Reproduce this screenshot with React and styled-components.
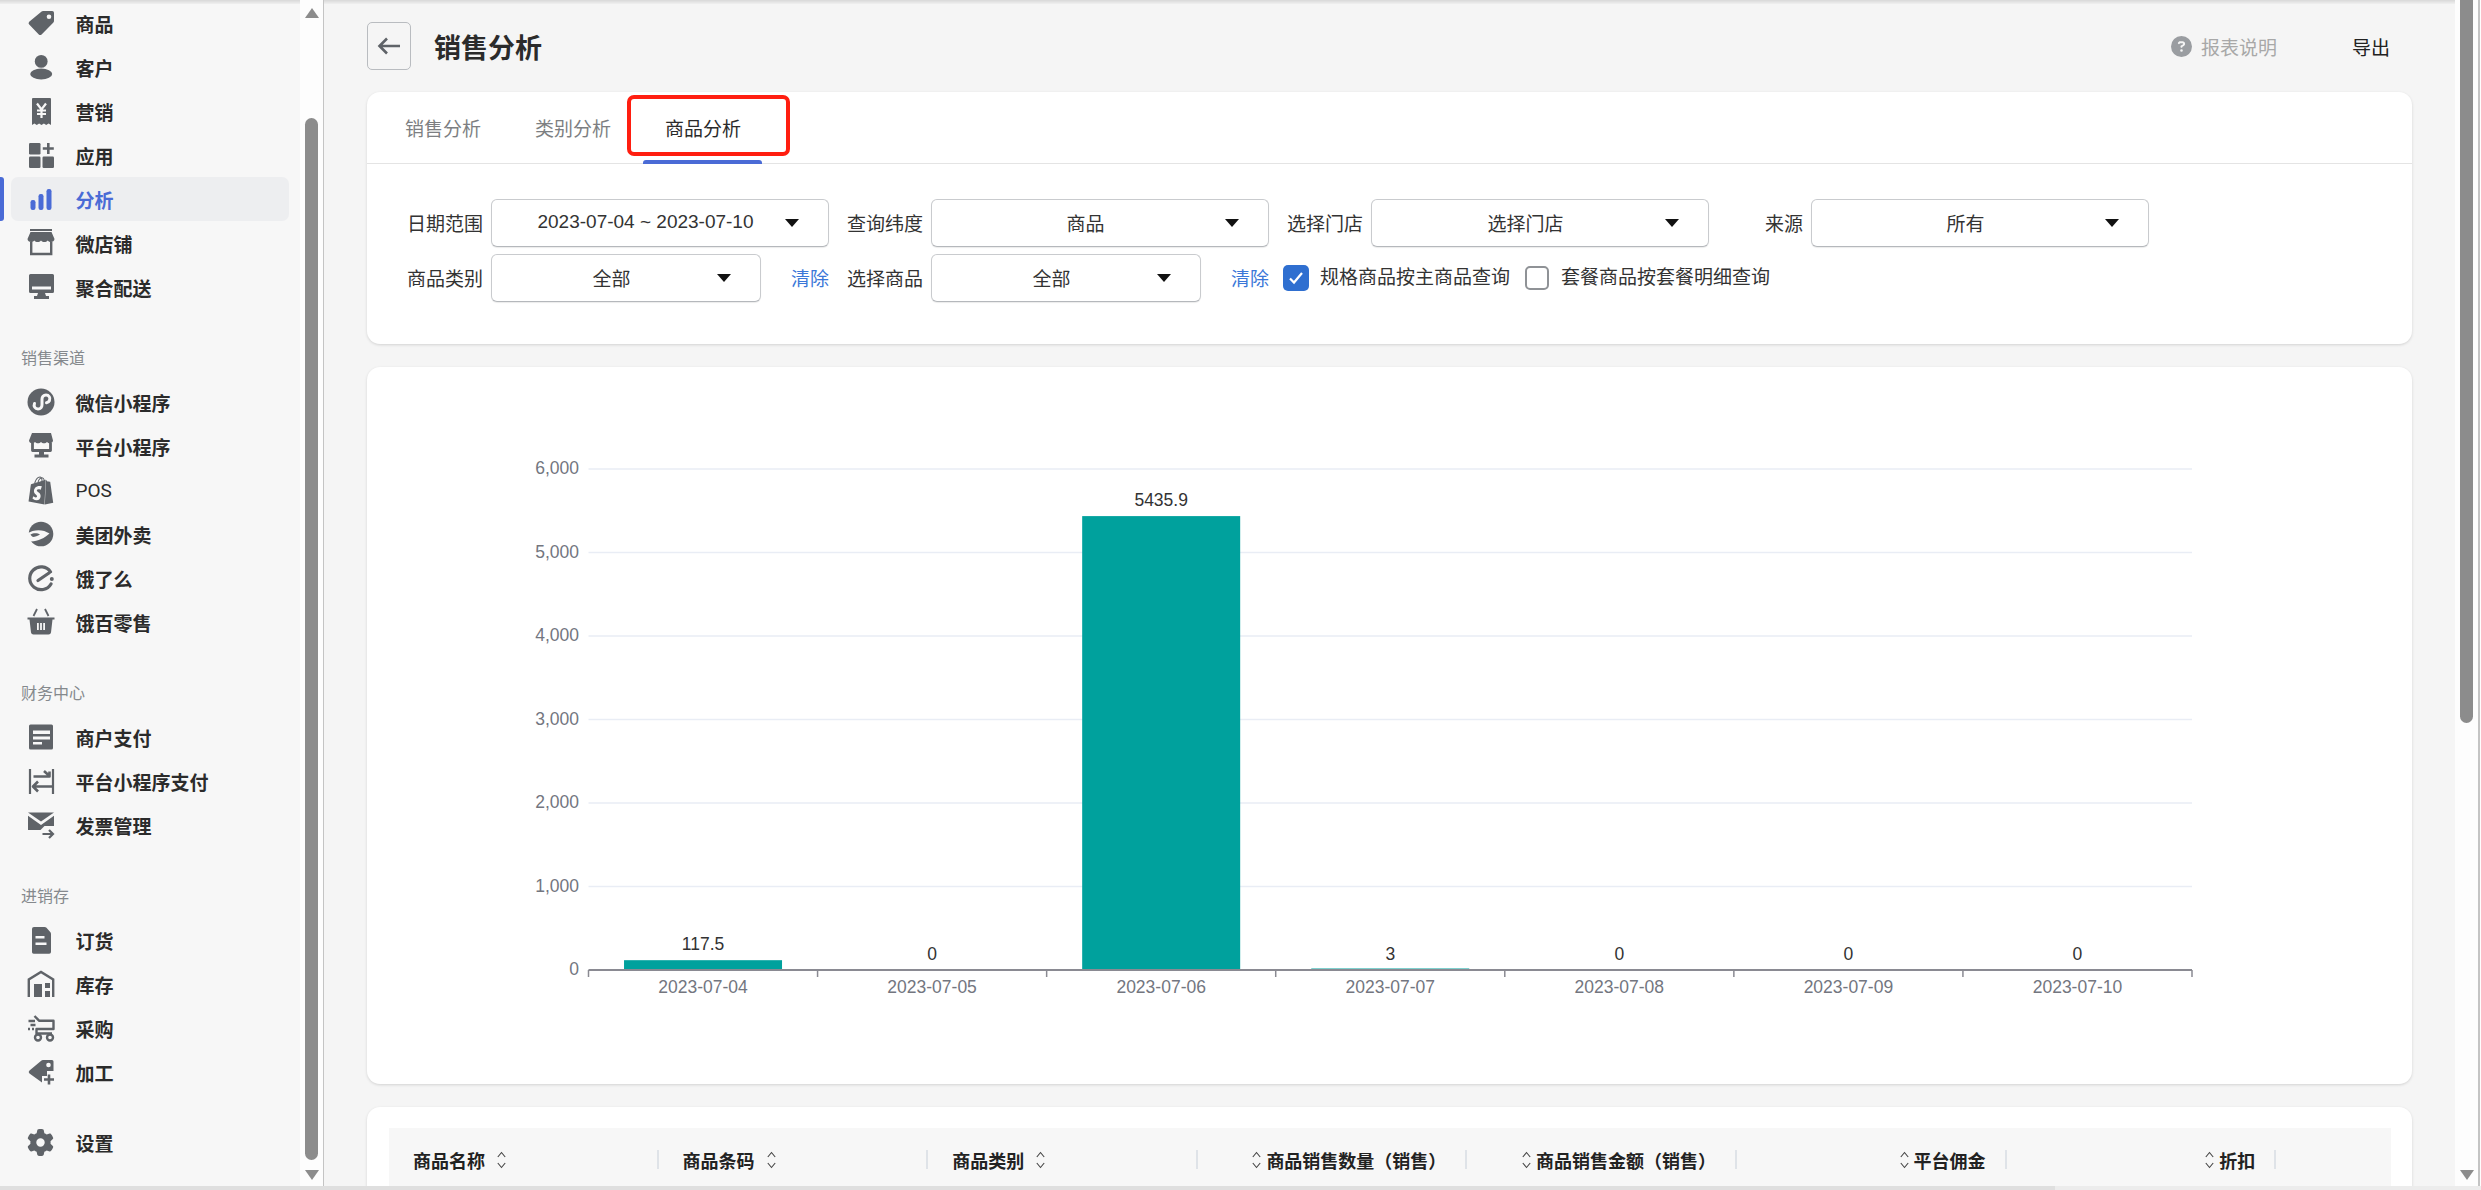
import React from 'react';
import styled, { createGlobalStyle } from 'styled-components';
import { SiShopify } from 'react-icons/si';
import { FaGear, FaCircleQuestion } from 'react-icons/fa6';

const GlobalStyle = createGlobalStyle`
  html, body { margin: 0; padding: 0; height: 100%; overflow: hidden; }
  body {
    font-family: "Liberation Sans", "Noto Sans CJK SC", sans-serif;
    background: #fff;
    color: #222;
  }
  * { box-sizing: border-box; }
`;

const ICON = '#5f6368';

const Glyph = ({ children, color = ICON }) => (
  <svg width="28" height="28" viewBox="0 0 28 28" fill={color} stroke="none">{children}</svg>
);

const line = { fill: 'none', stroke: ICON, strokeWidth: 2.4 };
const white = { fill: 'none', stroke: '#f7f7f7', strokeWidth: 2.2 };

const icons = {
  tag: <Glyph><path fillRule="evenodd" d="M16 2h9.2A1.8 1.8 0 0 1 27 3.8V12a2 2 0 0 1-.6 1.4L14.6 25.4a2 2 0 0 1-2.8 0L2.2 15.6a2 2 0 0 1 0-2.8L14.6 2.6A2 2 0 0 1 16 2zm6 3.4a2.3 2.3 0 1 0 0 4.6 2.3 2.3 0 0 0 0-4.6z" /></Glyph>,
  user: <Glyph><circle cx="14.2" cy="8.4" r="6.4" /><ellipse cx="14.2" cy="21" rx="11" ry="5.4" /></Glyph>,
  coupon: <Glyph><path d="M5 2a1 1 0 0 1 1-1h17a1 1 0 0 1 1 1v26l-2.4-1.6-2.4 1.6-2.3-1.6-2.4 1.6-2.4-1.6-2.3 1.6-2.4-1.6L5 28z" /><path {...white} d="M10 6.5l4.5 6 4.5-6M14.5 12.5V21M10 13.5h9M10 17h9" /></Glyph>,
  apps: <Glyph><rect x="2" y="2" width="11.5" height="11.5" rx="1.2" /><rect x="2" y="15.5" width="11.5" height="11.5" rx="1.2" /><rect x="15.5" y="15.5" width="11.5" height="11.5" rx="1.2" /><path d="M20 2h2.6v4.2h4.2v2.6h-4.2V13H20V8.8h-4.2V6.2H20z" /></Glyph>,
  chart: <Glyph color="#4a6bd6"><rect x="3.5" y="15" width="5" height="10" rx="2.2" /><rect x="11.5" y="9" width="5" height="16" rx="2.2" /><rect x="19.5" y="4" width="5" height="21" rx="2.2" /></Glyph>,
  store: <Glyph><path d="M3 0h22v2H3zM3.5 3h21L27.5 10c0 2-2 3-3.4 3-1.3 0-2.4-.6-3.4-1.6-1 1-2 1.6-3.3 1.6s-2.4-.6-3.4-1.6c-1 1-2.1 1.6-3.4 1.6s-2.3-.6-3.3-1.6c-1 1-2.1 1.6-3.4 1.6C2.5 13 .5 12 .5 10z" /><path {...line} d="M4.2 13v12h20V13" /></Glyph>,
  monitor: <Glyph><path fillRule="evenodd" d="M3.5 1h22A1.5 1.5 0 0 1 27 2.5v16a1.5 1.5 0 0 1-1.5 1.5h-22A1.5 1.5 0 0 1 2 18.5v-16A1.5 1.5 0 0 1 3.5 1zM5 13.5V16.5h19V13.5z" /><path d="M11 20h7l1 3h3v3H7v-3h3z" /></Glyph>,
  wechat: <Glyph><circle cx="14" cy="14" r="13.5" /><path fill="none" stroke="#f7f7f7" strokeWidth="3" strokeLinecap="round" d="M7.5 15.5c-1.2 2.8.6 5.5 3.5 5.5 2.6 0 4-2 4-4.3v-5.4c0-2.3 1.4-4.3 4-4.3 2.9 0 4.7 2.7 3.5 5.5-.6 1.3-1.8 2-3 2.2" /></Glyph>,
  miniShop: <Glyph><path d="M5 1h19l2 7.5c0 1.6-1.4 2.8-3 2.8-1.2 0-2.2-.6-3-1.4-.8.8-1.8 1.4-3 1.4s-2.2-.6-3-1.4c-.8.8-1.8 1.4-3 1.4s-2.2-.6-3-1.4c-.8.8-1.8 1.4-3 1.4-1.6 0-3-1.2-3-2.8z" /><path {...line} strokeWidth="2.8" strokeLinejoin="round" d="M5.5 11V18.5h18V11" /><path d="M12 19.5h5v3h4.5v3H7.5v-3H12z" /></Glyph>,
  shopify: <SiShopify size={29} color={ICON} />,
  meituan: <Glyph><circle cx="14" cy="14" r="12.3" /><path fill="#f7f7f7" d="M0 13.5C7 9 16 9 22.5 13.5 18 18 11 21 4 21.5L0 20z" /><path d="M3.5 14.5c3-2 7.5-1.5 9.5 0-2.5 1.5-5 2.5-7 2.5-1-.6-2-1.5-2.5-2.5z" /></Glyph>,
  eleme: <Glyph><path fill="none" stroke={ICON} strokeWidth="3.2" strokeLinecap="round" d="M23.5 7.8A11.4 11.4 0 1 0 24 20" /><path fill="none" stroke={ICON} strokeWidth="3.2" strokeLinecap="round" d="M11 16.5l11-7.5" /><circle cx="24.8" cy="15" r="2" /></Glyph>,
  basket: <Glyph><path {...line} strokeWidth="1.8" d="M10 1l-3.5 7M18 1l3.5 7" /><path fillRule="evenodd" d="M.5 9.5h27V11.5h-2L24 24.5a2.5 2.5 0 0 1-2.5 2H6.5a2.5 2.5 0 0 1-2.5-2L2.5 11.5h-2zM10 15v7h1.8v-7zm3.1 0v7h1.8v-7zm3.1 0v7H18v-7z" /></Glyph>,
  article: <Glyph><path fillRule="evenodd" d="M3.5 1.5h21A1.5 1.5 0 0 1 26 3v22a1.5 1.5 0 0 1-1.5 1.5h-21A1.5 1.5 0 0 1 2 25V3A1.5 1.5 0 0 1 3.5 1.5zM6 7.5v3.5h17V7.5zm0 6V16.5h17V13.5zM6 19v2.5h9V19z" /></Glyph>,
  transfer: <Glyph><path {...line} strokeWidth="2.2" d="M3 2v25M26 2v25" /><path {...line} strokeWidth="2.6" strokeLinejoin="round" d="M6.5 9.5H22.5V4.5M23 9.5l-6-5.5M26 19.5H6M11 14.5l-5 5 5 5" /></Glyph>,
  mail: <Glyph><path d="M1 1.5h26L14 10.5zM1 4.8l13 9.2 13-9.2V15H17.5l-4 4H1z" /><path {...line} strokeWidth="2.2" d="M15.5 23H26M22 19l4 4-4 4" /></Glyph>,
  doc: <Glyph><path fillRule="evenodd" d="M7 1h10.5c.8 0 1.5.3 2 .8l3.7 4.2c.5.5.8 1.2.8 1.9V26a1.8 1.8 0 0 1-1.8 1.8H7A1.8 1.8 0 0 1 5 26V3a2 2 0 0 1 2-2zm1.5 9v2.5h9V10zm0 6.5V19h11v-2.5z" /></Glyph>,
  warehouse: <Glyph><path {...line} d="M1.8 27V9.5L14 2l12.2 7.5V27" /><rect x="7" y="14" width="8" height="13" /><rect x="18" y="13" width="5" height="5" /><rect x="18" y="21" width="5" height="6" /></Glyph>,
  cart: <Glyph><path {...line} strokeLinejoin="round" d="M7.5 2l4.5 4.7h14.5V15H9.5v4.5H25" /><path {...line} d="M1.5 7h6.500M3.500 11h5M1 15h2M5 15h2" /><circle {...line} cx="11" cy="23.5" r="3" /><circle {...line} cx="23" cy="23.5" r="3" /></Glyph>,
  tagPlus: <Glyph><path fillRule="evenodd" d="M14.5 2.5A2 2 0 0 1 16 2h9A1.5 1.5 0 0 1 26.5 3.5V13H20v5h-5v6.5L2.5 15.5a2 2 0 0 1 0-3zM21.5 4.7a2.3 2.3 0 1 0 0 4.6 2.3 2.3 0 0 0 0-4.6z" /><path {...line} strokeWidth="2.6" d="M22 16.5V26.5M17 21.5H27" /></Glyph>,
  gear: <FaGear size={27} color={ICON} />,
};

const navGroups = [
  {
    items: [
      ['tag', '商品'], ['user', '客户'], ['coupon', '营销'], ['apps', '应用'],
      ['chart', '分析', true], ['store', '微店铺'], ['monitor', '聚合配送'],
    ],
  },
  {
    title: '销售渠道',
    items: [
      ['wechat', '微信小程序'], ['miniShop', '平台小程序'], ['shopify', 'POS'],
      ['meituan', '美团外卖'], ['eleme', '饿了么'], ['basket', '饿百零售'],
    ],
  },
  {
    title: '财务中心',
    items: [['article', '商户支付'], ['transfer', '平台小程序支付'], ['mail', '发票管理']],
  },
  {
    title: '进销存',
    items: [['doc', '订货'], ['warehouse', '库存'], ['cart', '采购'], ['tagPlus', '加工']],
  },
  { items: [['gear', '设置']] },
];

const Page = styled.div`
  display: flex;
  height: 1190px;
  width: 2481px;
  padding-right: 1px;
  overflow: hidden;
  position: relative;
`;

const TopShade = styled.div`
  position: absolute;
  top: 0;
  left: 0;
  right: 26px;
  height: 4px;
  background: linear-gradient(#d8d8d8, #f0f0f0);
  z-index: 3;
`;

const BottomBar = styled.div`
  position: absolute;
  left: 0;
  right: 0;
  bottom: 0;
  height: 4px;
  background: linear-gradient(90deg, #dfdfdf 0 2055px, #ececec 2055px);
  z-index: 5;
`;

const Sidebar = styled.nav`
  width: 300px;
  flex: none;
  background: #f7f7f7;
  padding-top: 1px;
`;

const NavGroup = styled.div`
  & + & { margin-top: 26px; }
`;

const GroupTitle = styled.div`
  height: 45px;
  padding: 12px 0 0 21px;
  font-size: 16px;
  line-height: 24px;
  color: #85898d;
`;

const NavRow = styled.div`
  position: relative;
  display: flex;
  align-items: center;
  height: 44px;
  margin: 0 11px;
  padding-left: 15.5px;
  gap: 21px;
  border-radius: 7px;
  font-size: 19px;
  font-weight: 700;
  color: ${p => (p.$active ? '#4a6bd6' : '#2b2b2b')};
  background: ${p => (p.$active ? '#edeef0' : 'transparent')};

  &::before {
    content: '';
    display: ${p => (p.$active ? 'block' : 'none')};
    position: absolute;
    left: -11px;
    top: 0;
    bottom: 0;
    width: 4px;
    border-radius: 0 3px 3px 0;
    background: #4a6bd6;
  }
`;

const NavIcon = styled.span`
  width: 28px;
  height: 30px;
  display: flex;
  align-items: center;
  justify-content: center;
`;

const NavLabel = styled.span`
  font-family: ${p => (p.$latin ? 'Roboto, sans-serif' : 'inherit')};
  font-weight: ${p => (p.$latin ? 400 : 700)};
`;

const Track = styled.div`
  flex: none;
  width: ${p => p.$width}px;
  height: 100%;
  background: #fdfdfd;
  border-right: ${p => p.$rule}px solid #c4c4c4;
  padding: ${p => (p.$bare ? '0' : '8px')} 5px 10px 5px;
  display: flex;
  flex-direction: column;
  align-items: center;
  z-index: 4;
`;

const Thumb = styled.div`
  width: 13px;
  background: #8c8c8c;
  border-radius: ${p => (p.$flat ? '0 0 7px 7px' : '7px')};
  margin-top: ${p => p.$top}px;
  height: ${p => p.$height}px;
`;

const Arrow = styled.div`
  width: 0;
  height: 0;
  border-left: 7px solid transparent;
  border-right: 7px solid transparent;
  border-bottom: ${p => (p.$down ? '0' : '10px solid #8c8c8c')};
  border-top: ${p => (p.$down ? '10px solid #8c8c8c' : '0')};
  margin-top: ${p => (p.$down ? 'auto' : '0')};
`;

const Main = styled.main`
  flex: 1;
  min-width: 0;
  height: 100%;
  overflow: hidden;
  padding: 22px 43px 0 43px;
  background: #f5f5f5;
  display: flex;
  flex-direction: column;
`;

const Header = styled.header`
  display: flex;
  align-items: center;
  height: 48px;
  margin-bottom: 22px;
`;

const BackButton = styled.button`
  width: 44px;
  height: 48px;
  padding: 0;
  display: flex;
  align-items: center;
  justify-content: center;
  background: #f5f5f5;
  border: 1px solid #b9bcc0;
  border-radius: 5px;
`;

const Title = styled.h1`
  margin: 0 auto 0 23px;
  font-size: 27px;
  font-weight: 700;
  color: #2b2b2b;
`;

const HelpLink = styled.span`
  display: flex;
  align-items: center;
  gap: 9px;
  font-size: 19px;
  color: #a8a8a8;
  svg { color: #9a9da1; }
`;

const ExportLink = styled.span`
  margin: 0 22px 0 75px;
  font-size: 19px;
  color: #222;
`;

const Card = styled.section`
  background: #fff;
  border-radius: 13px;
  box-shadow: 0 1px 3px rgba(0, 0, 0, .14);
  height: ${p => p.$height}px;
  flex: none;
  margin-bottom: 23px;
`;

const TabBar = styled.div`
  position: relative;
  display: flex;
  height: 72px;
  border-bottom: 1px solid #e4e4e4;
  padding-left: 38px;
  gap: 54px;
`;

const Tab = styled.div`
  position: relative;
  display: flex;
  align-items: center;
  height: 100%;
  font-size: 19px;
  padding-bottom: 1px;
  color: ${p => (p.$active ? '#2b2b2b' : '#7d7f82')};

  &::after {
    content: '';
    display: ${p => (p.$active ? 'block' : 'none')};
    position: absolute;
    left: -22px;
    right: -21px;
    bottom: -1px;
    height: 4px;
    border-radius: 3px 3px 0 0;
    background: #4a6bd6;
  }
`;

const Callout = styled.div`
  position: absolute;
  left: 260px;
  top: 3px;
  width: 163px;
  height: 61px;
  border: 4px solid #ff1e10;
  border-radius: 7px;
`;

const Filters = styled.div`
  display: grid;
  grid-template-columns: repeat(4, 440px);
  grid-auto-rows: 48px;
  row-gap: 7px;
  padding: 35px 0 0 22px;
`;

const Field = styled.div`
  display: grid;
  grid-template-columns: 94px ${p => p.$selectWidth || 338}px auto;
  column-gap: 8px;
  align-items: center;
  font-size: 19px;
  color: #333;
`;

const FieldLabel = styled.label`
  text-align: right;
  padding-bottom: 2px;
`;

const Select = styled.div`
  position: relative;
  display: flex;
  align-items: center;
  height: 48px;
  padding-right: 29px;
  background: #fff;
  border: 1px solid #c9cbce;
  border-bottom-color: #b5b8bc;
  border-radius: 6px;
  box-shadow: 0 1px 1px rgba(0, 0, 0, .08);
`;

const SelectValue = styled.span`
  flex: 1;
  text-align: center;
  padding-bottom: 2px;
`;

const Caret = styled.i`
  flex: none;
  width: 0;
  height: 0;
  margin-left: -14px;
  border-left: 7px solid transparent;
  border-right: 7px solid transparent;
  border-top: 8px solid #111;
`;

const ClearLink = styled.a`
  margin-left: 22px;
  padding-bottom: 2px;
  color: #3b77d8;
  white-space: nowrap;
`;

const CheckGroup = styled.div`
  grid-column: span 2;
  display: flex;
  align-items: center;
  font-size: 19px;
  line-height: 26px;
  color: #333;
  margin-left: 14px;
  padding-bottom: 1px;
`;

const CheckBox = styled.span`
  flex: none;
  width: ${p => (p.$on ? 26 : 24)}px;
  height: ${p => (p.$on ? 26 : 24)}px;
  display: flex;
  align-items: center;
  justify-content: center;
  margin-right: ${p => (p.$on ? 11 : 12)}px;
  margin-left: ${p => (p.$on ? 0 : 15)}px;
  border-radius: 5px;
  background: ${p => (p.$on ? '#2f6fd0' : '#fff')};
  border: ${p => (p.$on ? '0' : '2px solid #8f9296')};
`;

const ChartCard = styled(Card)`
  svg { display: block; }
`;

const TableCard = styled(Card)`
  padding: 21px 21px 0 22px;
  height: 120px;
  margin: 0;
`;

const TableHead = styled.div`
  display: grid;
  grid-template-columns: repeat(7, 269.6px) 1fr;
  height: 66px;
  background: #f7f7f7;
  padding-top: 22px;
`;

const HeadCell = styled.div`
  display: flex;
  align-items: center;
  justify-content: ${p => (p.$right ? 'flex-end' : 'flex-start')};
  gap: ${p => (p.$right ? 5 : 12)}px;
  height: 19px;
  padding: 0 19px 0 24px;
  border-right: ${p => (p.$last ? '0' : '2px solid #dfe3e8')};
  font-size: 18px;
  font-weight: 700;
  color: #222;
`;

const SortIcon = () => (
  <svg width="9" height="18" viewBox="0 0 9 18" fill="none" stroke="#444" strokeWidth="1.1">
    <path d="M.8 6L4.5 1.5 8.2 6M.8 12l3.7 4.5L8.2 12" />
  </svg>
);

const dates = ['2023-07-04', '2023-07-05', '2023-07-06', '2023-07-07', '2023-07-08', '2023-07-09', '2023-07-10'];
const values = [117.5, 0, 5435.9, 3, 0, 0, 0];
const ticks = [0, 1000, 2000, 3000, 4000, 5000, 6000];

// plot area, in px inside the chart card
const PLOT = { left: 221.5, right: 1825, base: 603, perUnit: 501 / 6000 };
const STEP = (PLOT.right - PLOT.left) / 7;

const SalesChart = () => (
  <svg width="2045" height="717" fontFamily='"Liberation Sans", sans-serif' fontSize="17.5">
    {ticks.map(t => (
      <g key={t}>
        {t > 0 && <line x1={PLOT.left} x2={PLOT.right} y1={PLOT.base - t * PLOT.perUnit} y2={PLOT.base - t * PLOT.perUnit} stroke="#e9edf5" strokeWidth="1.5" />}
        <text x={212} y={PLOT.base - t * PLOT.perUnit + 5} textAnchor="end" fill="#73767f">{t.toLocaleString('en-US')}</text>
      </g>
    ))}
    {dates.map((d, i) => {
      const cx = PLOT.left + STEP * (i + .5);
      const h = values[i] * PLOT.perUnit;
      return (
        <g key={d}>
          {values[i] > 0 && <rect x={cx - 79} y={PLOT.base - Math.max(h, 1.5)} width="158" height={Math.max(h, 1.5)} fill="#00a19d" />}
          <text x={cx} y={PLOT.base - h - 10} textAnchor="middle" fill="#333">{values[i]}</text>
          <text x={cx} y={626} textAnchor="middle" fill="#73767f">{d}</text>
        </g>
      );
    })}
    <line x1={PLOT.left} x2={PLOT.right} y1={PLOT.base} y2={PLOT.base} stroke="#8a8a92" strokeWidth="2" />
    {dates.concat('').map((_, i) => (
      <line key={i} x1={PLOT.left + STEP * i} x2={PLOT.left + STEP * i} y1={PLOT.base} y2={PLOT.base + 7} stroke="#8a8a92" strokeWidth="1.5" />
    ))}
  </svg>
);

const columns = [
  ['商品名称'], ['商品条码'], ['商品类别'],
  ['商品销售数量（销售）', true], ['商品销售金额（销售）', true], ['平台佣金', true], ['折扣', true],
];

export default function App() {
  return (
    <Page>
      <GlobalStyle />
      <TopShade />
      <BottomBar />
      <Sidebar>
        {navGroups.map((group, i) => (
          <NavGroup key={i}>
            {group.title && <GroupTitle>{group.title}</GroupTitle>}
            {group.items.map(([icon, label, active]) => (
              <NavRow key={label} $active={active}>
                <NavIcon>{icons[icon]}</NavIcon>
                <NavLabel $latin={label === 'POS'}>{label}</NavLabel>
              </NavRow>
            ))}
          </NavGroup>
        ))}
      </Sidebar>
      <Track $width={24} $rule={1}>
        <Arrow />
        <Thumb $top={100} $height={1042} />
        <Arrow $down />
      </Track>
      <Main>
        <Header>
          <BackButton>
            <svg width="24" height="18" viewBox="0 0 24 18" fill="none" stroke="#5f6368" strokeWidth="2.6">
              <path d="M23 9H3M10 1.5L2.5 9l7.5 7.5" />
            </svg>
          </BackButton>
          <Title>销售分析</Title>
          <HelpLink><FaCircleQuestion size={21} />报表说明</HelpLink>
          <ExportLink>导出</ExportLink>
        </Header>
        <Card $height={252}>
          <TabBar>
            <Tab>销售分析</Tab>
            <Tab>类别分析</Tab>
            <Tab $active>商品分析</Tab>
            <Callout />
          </TabBar>
          <Filters>
            <Field><FieldLabel>日期范围</FieldLabel><Select><SelectValue>2023-07-04 ~ 2023-07-10</SelectValue><Caret /></Select></Field>
            <Field><FieldLabel>查询纬度</FieldLabel><Select><SelectValue>商品</SelectValue><Caret /></Select></Field>
            <Field><FieldLabel>选择门店</FieldLabel><Select><SelectValue>选择门店</SelectValue><Caret /></Select></Field>
            <Field><FieldLabel>来源</FieldLabel><Select><SelectValue>所有</SelectValue><Caret /></Select></Field>
            <Field $selectWidth={270}><FieldLabel>商品类别</FieldLabel><Select><SelectValue>全部</SelectValue><Caret /></Select><ClearLink>清除</ClearLink></Field>
            <Field $selectWidth={270}><FieldLabel>选择商品</FieldLabel><Select><SelectValue>全部</SelectValue><Caret /></Select><ClearLink>清除</ClearLink></Field>
            <CheckGroup>
              <CheckBox $on>
                <svg width="16" height="14" viewBox="0 0 16 14" fill="none" stroke="#fff" strokeWidth="2.2"><path d="M2 7.5l4 4 8-9.5" /></svg>
              </CheckBox>
              规格商品按主商品查询
              <CheckBox />
              套餐商品按套餐明细查询
            </CheckGroup>
          </Filters>
        </Card>
        <ChartCard $height={717}>
          <SalesChart />
        </ChartCard>
        <TableCard>
          <TableHead>
            {columns.map(([name, right]) => (
              <HeadCell key={name} $right={right}>
                {right && <SortIcon />}
                {name}
                {!right && <SortIcon />}
              </HeadCell>
            ))}
          </TableHead>
        </TableCard>
      </Main>
      <Track $width={25} $rule={2} $bare>
        <Thumb $flat $top={0} $height={723} />
        <Arrow $down />
      </Track>
    </Page>
  );
}
